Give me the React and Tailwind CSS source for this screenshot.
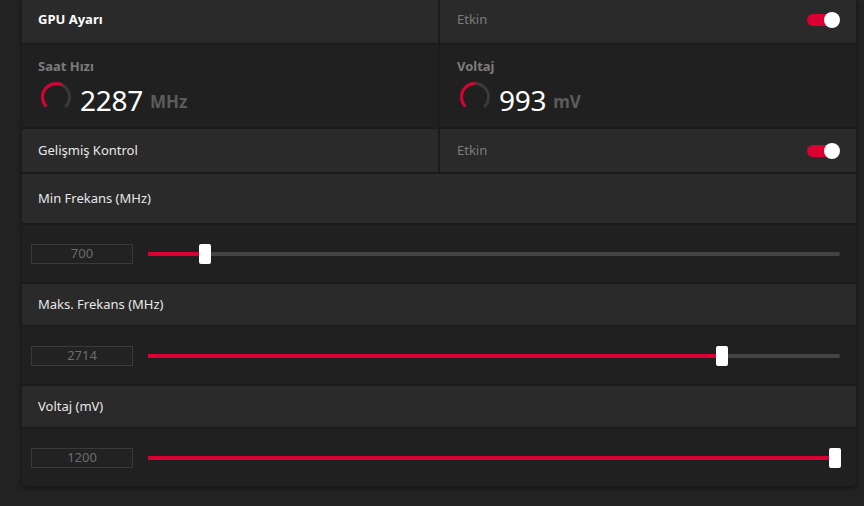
import React from "react";

const RED = "#dc0032";

function Toggle() {
  return (
    <div className="relative w-[33px] h-[18px] flex items-center">
      <div className="h-[12px] w-[28px] rounded-full bg-[#dc0032]" />
      <div className="absolute right-0 top-[1px] w-[16px] h-[16px] rounded-full bg-white" />
    </div>
  );
}

function Gauge({ frac }) {
  const r = 13.5;
  const c = 2 * Math.PI * r;
  const arc = c * 0.75;
  return (
    <svg width="32" height="32" viewBox="0 0 32 32" className="shrink-0">
      <g transform="rotate(135 16 16)">
        <circle cx="16" cy="16" r={r} fill="none" stroke="#3a3a3a" strokeWidth="3" strokeDasharray={`${arc} ${c}`} />
        <circle cx="16" cy="16" r={r} fill="none" stroke={RED} strokeWidth="3" strokeDasharray={`${arc * frac} ${c}`} />
      </g>
    </svg>
  );
}

function Stat({ label, value, unit, frac, first }) {
  return (
    <div className={`bg-[#202020] h-[82px] pt-[12px] ${first ? "pl-[16px]" : "pl-[17px]"}`}>
      <div className="text-[13px] font-bold text-[#7c7c7c] leading-[18px]">{label}</div>
      <div className="flex items-center mt-[4px]">
        <div className="ml-[2px] mt-[-2px]">
          <Gauge frac={frac} />
        </div>
        <span className="ml-[8px] mt-[4px] text-[28px] leading-[34px] text-white font-normal tracking-[-0.3px]">{value}</span>
        <span className="ml-[7px] mt-[7px] text-[17px] font-bold text-[#5c5c5c]">{unit}</span>
      </div>
    </div>
  );
}

function ToggleRow({ label, bold, top }) {
  return (
    <div className={`grid grid-cols-2 gap-[2px] ${top ? "h-[46px] mt-[-3px]" : "h-[43px]"}`}>
      <div className={`bg-[#2a2a2a] flex items-center pl-[16px] text-[13px] ${bold ? "font-bold text-white" : "text-[#e8e8e8]"}`}>{label}</div>
      <div className="bg-[#2a2a2a] flex items-center justify-between pl-[17px] pr-[16px]">
        <span className="text-[13px] text-[#7c7c7c]">Etkin</span>
        <Toggle />
      </div>
    </div>
  );
}

function Header({ label, h }) {
  return (
    <div className={`bg-[#2a2a2a] flex items-center pl-[16px] text-[13px] text-[#e8e8e8] ${h}`}>{label}</div>
  );
}

function SliderRow({ value, thumbX, rounded }) {
  const left = thumbX - 148;
  return (
    <div className={`bg-[#202020] h-[57px] flex items-center pl-[9px] pr-[16px] ${rounded ? "rounded-b-[4px]" : ""}`}>
      <div className="w-[102px] h-[20px] border border-[#3a3a3a] bg-[#222] flex items-center justify-center text-[13px] text-[#6c6c6c] shrink-0">
        {value}
      </div>
      <div className="relative ml-[15px] flex-1 h-[20px] flex items-center">
        <div className="absolute left-0 right-0 top-[8px] h-[4px] rounded-full bg-[#444]" />
        <div className="absolute left-0 top-[8px] h-[4px] bg-[#dc0032]" style={{ width: left }} />
        <div className="absolute top-0 w-[12px] h-[20px] rounded-[2px] bg-white" style={{ left: left - 6 }} />
      </div>
    </div>
  );
}

export default function App() {
  return (
    <div className="w-[864px] h-[506px] bg-[#232323] overflow-hidden" style={{ fontFamily: '"Noto Sans", "Open Sans", sans-serif' }}>
      <div className="ml-[22px] w-[834px] bg-[#1b1b1b] flex flex-col gap-[2px] rounded-b-[4px] shadow-[0_2px_6px_rgba(0,0,0,0.5)]">
        <ToggleRow label="GPU Ayarı" bold top />
        <div className="grid grid-cols-2 gap-[2px]">
          <Stat label="Saat Hızı" value="2287" unit="MHz" frac={0.6} first />
          <Stat label="Voltaj" value="993" unit="mV" frac={0.5} />
        </div>
        <ToggleRow label="Gelişmiş Kontrol" />
        <Header label="Min Frekans (MHz)" h="h-[49px]" />
        <SliderRow value="700" thumbX={205} />
        <Header label="Maks. Frekans (MHz)" h="h-[41px]" />
        <SliderRow value="2714" thumbX={722} />
        <Header label="Voltaj (mV)" h="h-[41px]" />
        <SliderRow value="1200" thumbX={835} rounded />
      </div>
    </div>
  );
}
